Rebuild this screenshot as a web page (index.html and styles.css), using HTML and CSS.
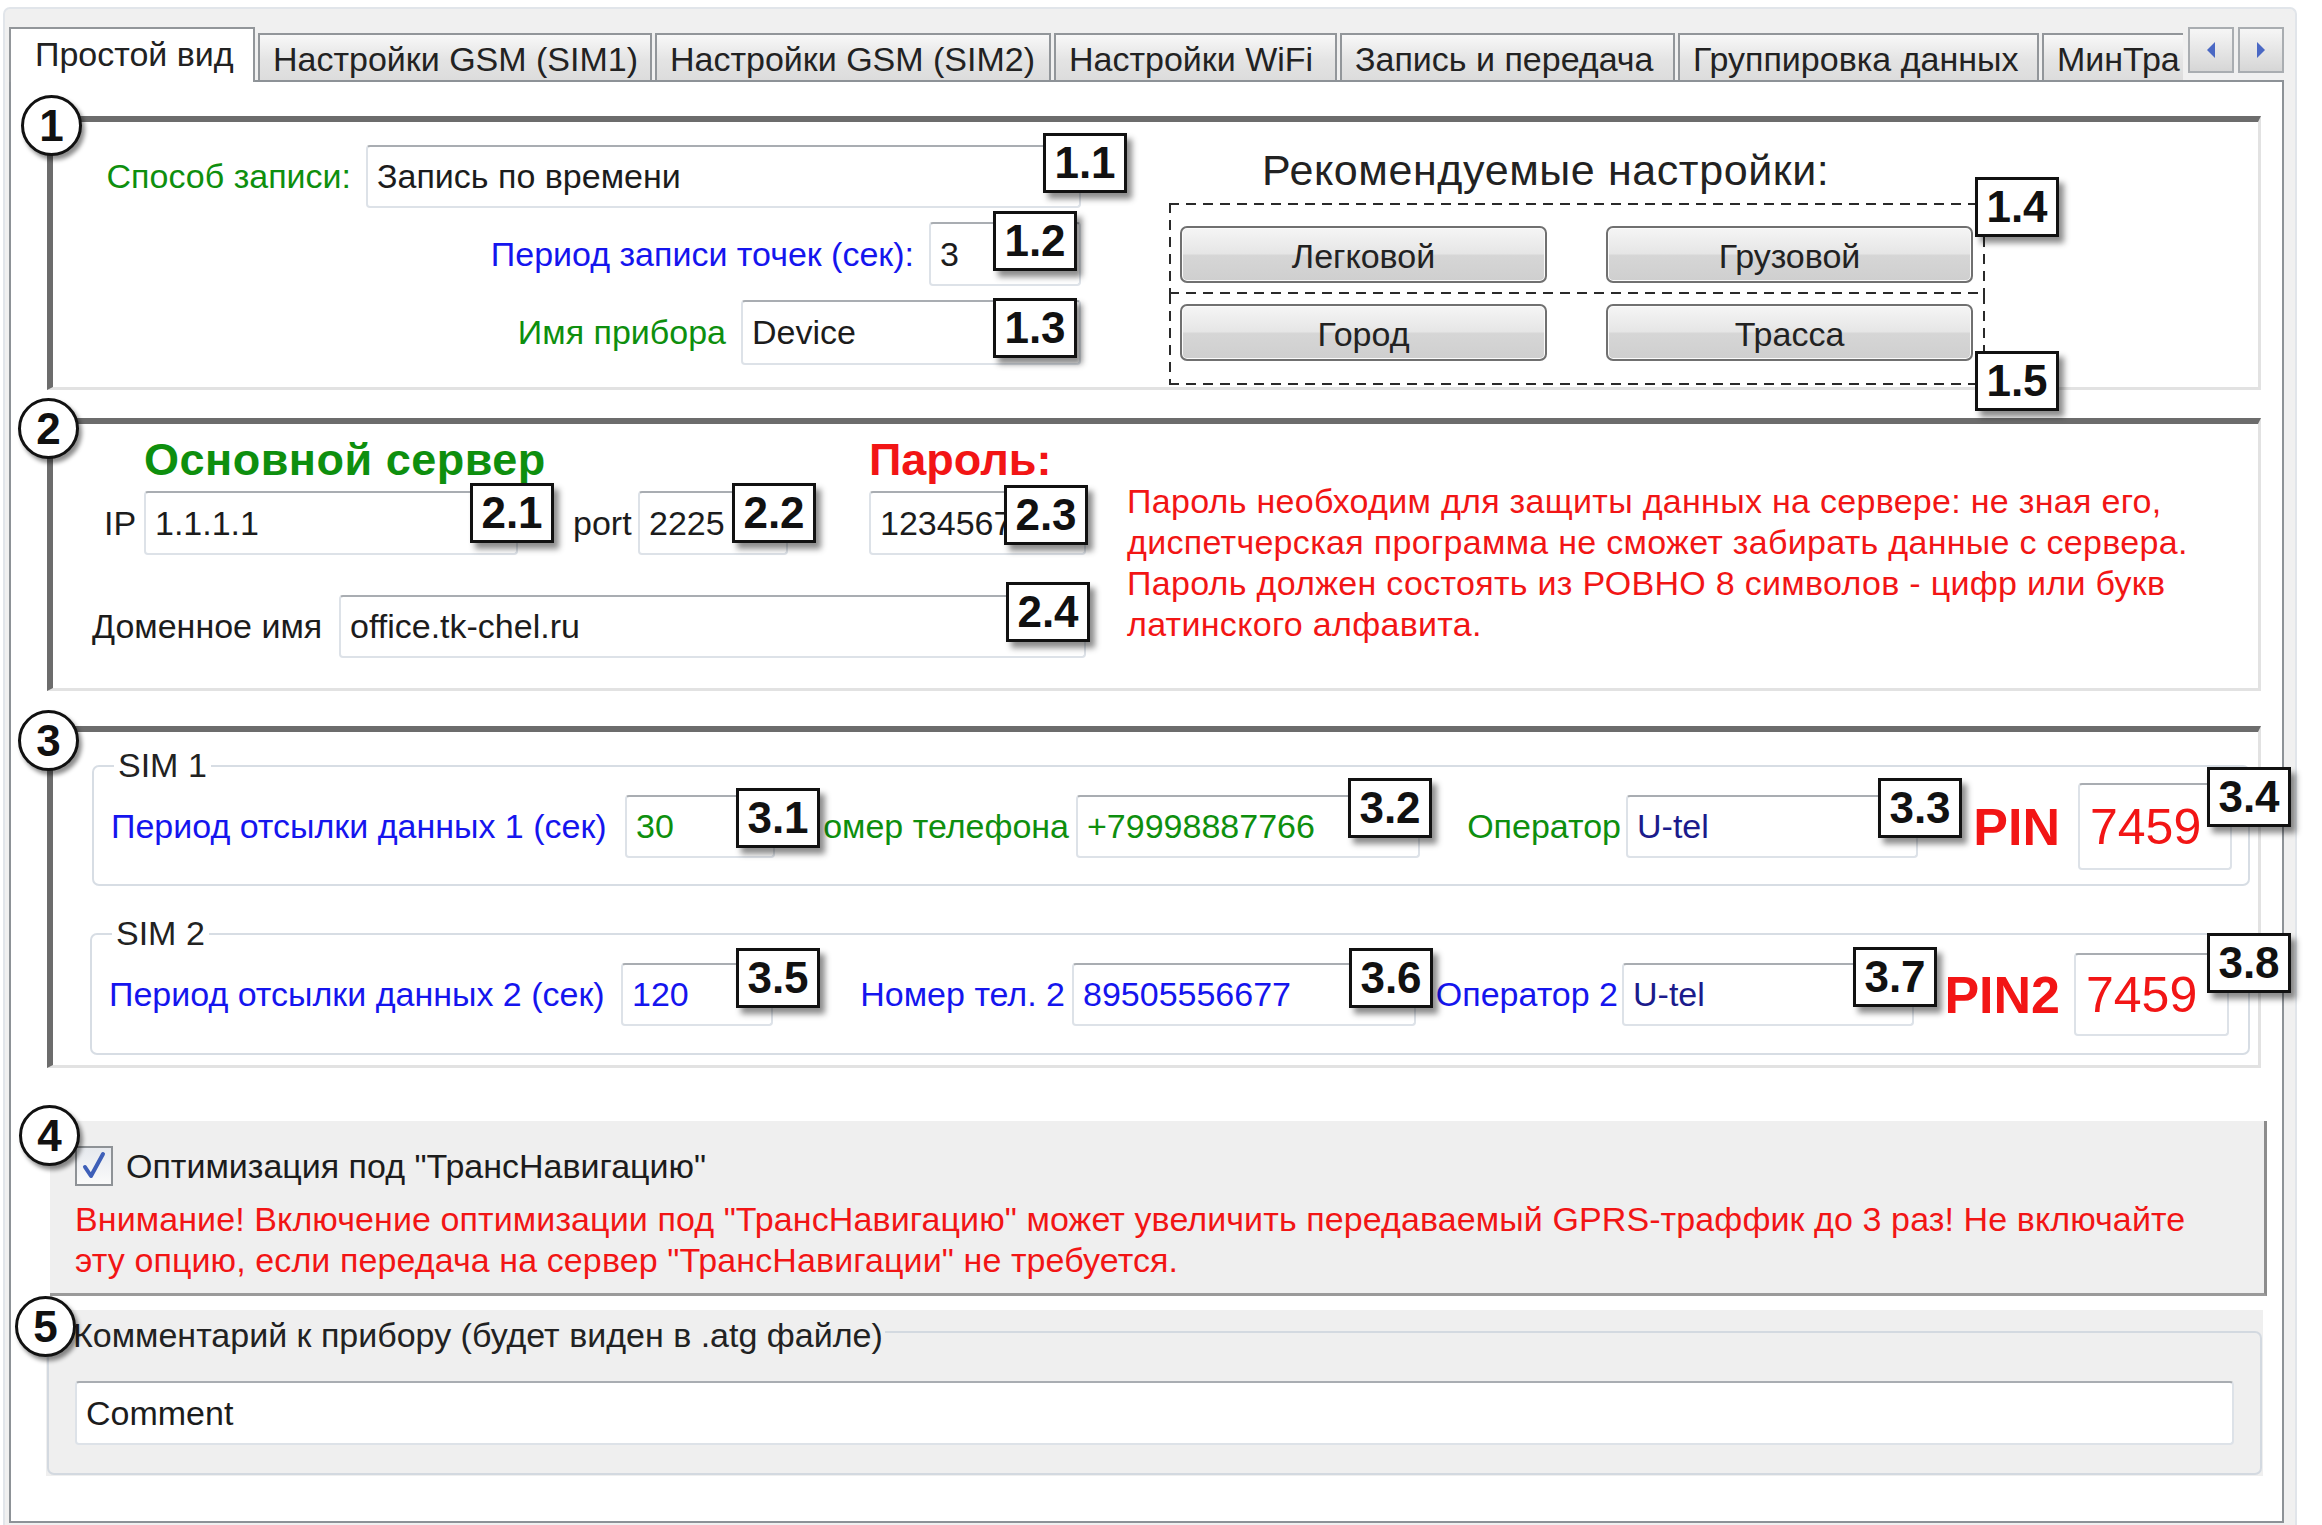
FILE: index.html
```html
<!DOCTYPE html>
<html lang="ru">
<head>
<meta charset="utf-8">
<title>Простой вид</title>
<link rel="stylesheet" href="styles.css">
</head>
<body>
<div class="window">
  <div class="tabstrip">
    <div class="tabs">
      <div class="tab active">Простой вид</div>
      <div class="tab tw2">Настройки GSM (SIM1)</div>
      <div class="tab tw3">Настройки GSM (SIM2)</div>
      <div class="tab tw4">Настройки WiFi</div>
      <div class="tab tw5">Запись и передача</div>
      <div class="tab tw6">Группировка данных</div>
      <div class="tab tw7">МинТра</div>
    </div>
    <div class="arrow"><svg width="12" height="18" viewBox="0 0 12 18"><polygon points="10,1 2,9 10,17" fill="#4a68c4"/></svg></div>
    <div class="arrow a2"><svg width="12" height="18" viewBox="0 0 12 18"><polygon points="2,1 10,9 2,17" fill="#4a68c4"/></svg></div>
  </div>

  <div class="panel">
    <!-- 1 -->
    <section class="grp g1">
      <span class="circle c1">1</span>
      <div class="g1-left">
        <div class="frow">
          <span class="green">Способ записи:</span>
          <div class="inp in-mode">Запись по времени</div>
        </div>
        <div class="frow">
          <span class="blue">Период записи точек (сек):</span>
          <div class="inp in-period">3</div>
        </div>
        <div class="frow">
          <span class="green">Имя прибора</span>
          <div class="inp in-name">Device</div>
        </div>
      </div>
      <div class="g1-right">
        <div class="rec-title">Рекомендуемые настройки:</div>
        <div class="dash d1">
          <div class="btn">Легковой</div>
          <div class="btn">Грузовой</div>
        </div>
        <div class="dash d2">
          <div class="btn">Город</div>
          <div class="btn">Трасса</div>
        </div>
      </div>
      <b class="tag t11">1.1</b>
      <b class="tag t12">1.2</b>
      <b class="tag t13">1.3</b>
      <b class="tag t14">1.4</b>
      <b class="tag t15">1.5</b>
    </section>

    <!-- 2 -->
    <section class="grp g2">
      <span class="circle c2">2</span>
      <div class="g2-left">
        <div class="heads">
          <span class="h-srv">Основной сервер</span>
          <span class="h-pw">Пароль:</span>
        </div>
        <div class="fields">
          <span class="lbl-ip">IP</span>
          <div class="inp in-ip">1.1.1.1</div>
          <span class="lbl-port">port</span>
          <div class="inp in-port">2225</div>
          <div class="inp in-pw">1234567</div>
        </div>
        <div class="dom">
          <span class="lbl-dom">Доменное имя</span>
          <div class="inp in-dom">office.tk-chel.ru</div>
        </div>
      </div>
      <div class="g2-note">Пароль необходим для защиты данных на сервере: не зная его,<br>диспетчерская программа не сможет забирать данные с сервера.<br>Пароль должен состоять из РОВНО 8 символов - цифр или букв<br>латинского алфавита.</div>
      <b class="tag t21">2.1</b>
      <b class="tag t22">2.2</b>
      <b class="tag t23">2.3</b>
      <b class="tag t24">2.4</b>
    </section>

    <!-- 3 -->
    <section class="grp g3">
      <span class="circle c3">3</span>
      <div class="sim sim1">
        <span class="legend">SIM 1</span>
        <div class="srow">
          <span class="blue s1-l1">Период отсылки данных 1 (сек)</span>
          <div class="inp green s1-i1">30</div>
          <span class="green rl s1-l2"><span>Номер телефона</span></span>
          <div class="inp green s-phone">+79998887766</div>
          <span class="green rl s1-l3">Оператор</span>
          <div class="inp navy s-op">U-tel</div>
          <span class="pin rl s1-l4">PIN</span>
          <div class="inp pinval s1-i4">7459</div>
        </div>
      </div>
      <div class="sim sim2">
        <span class="legend">SIM 2</span>
        <div class="srow">
          <span class="blue s2-l1">Период отсылки данных 2 (сек)</span>
          <div class="inp blue s2-i1">120</div>
          <span class="blue rl s2-l2">Номер тел. 2</span>
          <div class="inp blue s-phone">89505556677</div>
          <span class="blue rl s2-l3">Оператор 2</span>
          <div class="inp navy s-op">U-tel</div>
          <span class="pin rl s2-l4">PIN2</span>
          <div class="inp pinval s2-i4">7459</div>
        </div>
      </div>
      <b class="tag t31">3.1</b>
      <b class="tag t32">3.2</b>
      <b class="tag t33">3.3</b>
      <b class="tag t34">3.4</b>
      <b class="tag t35">3.5</b>
      <b class="tag t36">3.6</b>
      <b class="tag t37">3.7</b>
      <b class="tag t38">3.8</b>
    </section>

    <!-- 4 -->
    <section class="g4">
      <span class="circle c4">4</span>
      <div class="chk-row">
        <span class="chk"><svg width="30" height="32" viewBox="0 0 30 32"><path d="M6 17 L12 26 L24 4" fill="none" stroke="#3e5fb8" stroke-width="4" stroke-linecap="round" stroke-linejoin="round"/></svg></span>
        <span>Оптимизация под "ТрансНавигацию"</span>
      </div>
      <div class="warn">Внимание! Включение оптимизации под "ТрансНавигацию" может увеличить передаваемый GPRS-траффик до 3 раз! Не включайте<br>эту опцию, если передача на сервер "ТрансНавигации" не требуется.</div>
    </section>

    <!-- 5 -->
    <section class="g5">
      <span class="circle c5">5</span>
      <div class="cfs">
        <span class="legend lg5">Комментарий к прибору (будет виден в .atg файле)</span>
        <div class="inp in-comment">Comment</div>
      </div>
    </section>
  </div>
</div>
</body>
</html>
```
FILE: styles.css
```css
* { box-sizing: border-box; }
html, body { margin: 0; background: #fff; }
body {
  font-family: "Liberation Sans", Arial, sans-serif;
  font-size: 34px;
  color: #1c1c1c;
  width: 2322px;
  height: 1525px;
  overflow: hidden;
}

.green { color: #0e8f0e; }
.blue { color: #1515ee; }
.navy { color: #1b1b8c; }
.rl { text-align: right; white-space: nowrap; }

/* window + tabs */
.window {
  margin: 7px 0 0 3px;
  width: 2294px;
  height: 1518px;
  border: 2px solid #e1e5ea;
  border-bottom: 0;
  border-radius: 7px 7px 0 0;
  background: #f0f0f0;
  padding: 18px 10px 0 4px;
}
.tabstrip { display: flex; height: 53px; align-items: flex-start; }
.tabs {
  display: flex;
  align-items: flex-end;
  width: 2174px;
  height: 55px;
  overflow: hidden;
  flex: none;
  position: relative;
  z-index: 2;
}
.tab {
  flex: none;
  height: 47px;
  margin: 0 0 2px 3px;
  border: 2px solid #92969a;
  border-bottom: 0;
  background: linear-gradient(#f8f8f8, #e4e4e4 55%, #dcdcdc);
  padding: 5px 0 0 13px;
  line-height: 38px;
  white-space: nowrap;
  overflow: hidden;
  color: #222;
}
.tab.active {
  height: 55px;
  width: 246px;
  margin: 0;
  background: #fff;
  padding: 6px 0 0 24px;
}
.tw2 { width: 394px; }
.tw3 { width: 396px; }
.tw4 { width: 283px; }
.tw5 { width: 335px; }
.tw6 { width: 361px; }
.tw7 { width: 160px; }
.arrow {
  flex: none;
  width: 46px;
  height: 46px;
  margin-left: 5px;
  border: 2px solid #a9adb1;
  background: linear-gradient(#f6f6f6, #e6e6e6 50%, #d6d6d6);
  display: flex;
  align-items: center;
  justify-content: center;
}
.arrow.a2 { margin-left: 4px; }

.panel {
  position: relative;
  z-index: 1;
  width: 2275px;
  height: 1443px;
  border: 2px solid #8d9297;
  background: #fff;
  padding: 34px 0 0 36px;
}

/* generic group frame */
.grp {
  position: relative;
  width: 2214px;
  border-top: 6px solid #6c6c6c;
  border-left: 6px solid #6c6c6c;
  border-right: 3px solid #e2e2e2;
  border-bottom: 3px solid #e2e2e2;
}
.g1 { height: 274px; display: flex; }
.g2 { height: 273px; display: flex; margin-top: 28px; }
.g3 { height: 342px; margin-top: 35px; }

.circle {
  position: absolute;
  z-index: 4;
  width: 61px;
  height: 61px;
  border: 3px solid #111;
  border-radius: 50%;
  background: #fff;
  font-weight: bold;
  font-size: 44px;
  line-height: 55px;
  text-align: center;
  color: #111;
  box-shadow: 3px 4px 4px rgba(0, 0, 0, 0.45);
}
.c1 { left: -32px; top: -27px; }
.c2 { left: -35px; top: -26px; }
.c3 { left: -35px; top: -22px; }
.c4 { left: -31px; top: -16px; }
.c5 { left: -31px; top: -14px; }

.tag {
  position: absolute;
  z-index: 4;
  width: 84px;
  height: 60px;
  border: 3px solid #111;
  background: #fff;
  font-family: "Liberation Sans Narrow", "Liberation Sans", Arial, sans-serif;
  font-weight: bold;
  font-size: 44px;
  line-height: 54px;
  text-align: center;
  color: #111;
  box-shadow: 5px 6px 6px rgba(0, 0, 0, 0.45);
}
.t11 { left: 990px; top: 11px; }
.t12 { left: 940px; top: 89px; }
.t13 { left: 940px; top: 176px; }
.t14 { left: 1922px; top: 55px; }
.t15 { left: 1922px; top: 229px; }
.t21 { left: 417px; top: 59px; }
.t22 { left: 679px; top: 59px; }
.t23 { left: 951px; top: 61px; }
.t24 { left: 953px; top: 158px; }
.t31 { left: 683px; top: 56px; }
.t32 { left: 1295px; top: 46px; }
.t33 { left: 1825px; top: 46px; }
.t34 { left: 2154px; top: 35px; }
.t35 { left: 683px; top: 216px; }
.t36 { left: 1296px; top: 216px; }
.t37 { left: 1800px; top: 215px; }
.t38 { left: 2154px; top: 201px; }

/* inputs */
.inp {
  flex: none;
  display: flex;
  align-items: center;
  height: 63px;
  padding-left: 9px;
  background: #fff;
  border: 2px solid #dde2e8;
  border-top-color: #a9adb2;
  border-radius: 4px;
  white-space: nowrap;
  overflow: hidden;
}

/* group 1 */
.g1-left {
  width: 1028px;
  padding-top: 23px;
  display: flex;
  flex-direction: column;
  gap: 14px;
}
.frow {
  display: flex;
  justify-content: flex-end;
  align-items: center;
  gap: 15px;
  white-space: nowrap;
}
.in-mode { width: 715px; height: 63px; }
.in-period { width: 152px; height: 64px; }
.in-name { width: 340px; height: 65px; }

.g1-right { margin-left: 88px; padding-top: 28px; width: 816px; }
.rec-title {
  font-size: 43px;
  letter-spacing: 0.6px;
  line-height: 40px;
  height: 40px;
  padding-left: 93px;
  margin-bottom: 13px;
  white-space: nowrap;
  color: #222;
}
.dash {
  height: 91px;
  display: flex;
  gap: 59px;
  padding-left: 11px;
  background:
    repeating-linear-gradient(90deg, #2a2a2a 0 10px, transparent 10px 17px) left bottom / 100% 2px no-repeat,
    repeating-linear-gradient(180deg, #2a2a2a 0 10px, transparent 10px 17px) left top / 2px 100% no-repeat,
    repeating-linear-gradient(180deg, #2a2a2a 0 10px, transparent 10px 17px) right top / 2px 100% no-repeat;
}
.d1 {
  padding-top: 23px;
  background:
    repeating-linear-gradient(90deg, #2a2a2a 0 10px, transparent 10px 17px) left top / 100% 2px no-repeat,
    repeating-linear-gradient(90deg, #2a2a2a 0 10px, transparent 10px 17px) left bottom / 100% 2px no-repeat,
    repeating-linear-gradient(180deg, #2a2a2a 0 10px, transparent 10px 17px) left top / 2px 100% no-repeat,
    repeating-linear-gradient(180deg, #2a2a2a 0 10px, transparent 10px 17px) right top / 2px 100% no-repeat;
}
.d2 { padding-top: 10px; }
.btn {
  flex: none;
  width: 367px;
  height: 57px;
  padding-top: 3px;
  border: 2px solid #707070;
  border-radius: 7px;
  background: linear-gradient(#f5f5f5, #e6e6e6 48%, #d6d6d6 52%, #cfcfcf);
  box-shadow: inset 0 0 0 1px #fbfbfb;
  display: flex;
  align-items: center;
  justify-content: center;
  color: #222;
}

/* group 2 */
.g2-left { width: 1033px; padding-top: 13px; flex: none; }
.heads { display: flex; height: 46px; line-height: 46px; font-weight: bold; white-space: nowrap; }
.h-srv { margin-left: 91px; width: 725px; font-size: 45px; letter-spacing: 0.5px; color: #0e8f0e; }
.h-pw { font-size: 45px; color: #f21515; }
.fields { display: flex; align-items: center; height: 64px; margin-top: 8px; }
.fields .inp { height: 64px; }
.lbl-ip { margin-left: 51px; width: 40px; }
.in-ip { width: 374px; }
.lbl-port { margin-left: 55px; width: 65px; }
.in-port { width: 150px; }
.in-pw { margin-left: 81px; width: 217px; }
.dom { display: flex; align-items: center; height: 63px; margin-top: 40px; }
.lbl-dom { margin-left: 39px; width: 247px; white-space: nowrap; }
.in-dom { width: 747px; }
.g2-note {
  margin-left: 41px;
  padding-top: 57px;
  color: #f21515;
  line-height: 41px;
  letter-spacing: 0.3px;
  white-space: nowrap;
}

/* group 3 */
.sim {
  border: 2px solid #d7dde4;
  border-radius: 7px;
}
.sim1 { width: 2158px; height: 121px; margin: 33px 0 0 39px; }
.sim2 { width: 2160px; height: 122px; margin: 47px 0 0 37px; }
.legend {
  display: block;
  width: max-content;
  height: 40px;
  line-height: 40px;
  margin: -22px 0 0 20px;
  padding: 0 4px;
  background: #fff;
  color: #222;
}
.srow { display: flex; align-items: center; height: 63px; margin-top: 10px; }
.srow > span { flex: none; white-space: nowrap; }
.s1-l1 { margin-left: 17px; width: 514px; }
.s1-i1 { width: 150px; }
.s1-l2 {
  margin-left: 48px;
  width: 253px;
  padding-right: 7px;
  display: flex;
  justify-content: flex-end;
  overflow: hidden;
}
.s1-l2 > span { flex: none; }
.s-phone { width: 344px; }
.s1-l3 { width: 206px; padding-right: 5px; }
.s-op { width: 292px; }
.s1-l4 { width: 160px; padding-right: 18px; }
.s1-i4 { width: 154px; height: 87px; }
.s2-l1 { margin-left: 17px; width: 512px; }
.s2-i1 { width: 152px; }
.s2-l2 { width: 299px; padding-right: 7px; }
.s2-l3 { width: 206px; padding-right: 4px; }
.s2-l4 { width: 160px; padding-right: 14px; }
.s2-i4 { width: 155px; height: 83px; }
.pin { color: #f21515; font-weight: bold; font-size: 52px; }
.pinval { color: #f21515; font-size: 50px; padding-left: 10px; }

/* group 4 */
.g4 {
  position: relative;
  width: 2217px;
  height: 175px;
  margin: 53px 0 0 3px;
  border-right: 3px solid #8c8c8c;
  border-bottom: 3px solid #9a9a9a;
  background: #efefef;
  padding: 25px 0 0 25px;
}
.chk-row { display: flex; align-items: center; gap: 13px; height: 40px; white-space: nowrap; }
.chk {
  width: 38px;
  height: 40px;
  border: 2px solid #8e9296;
  background: linear-gradient(#e6e9ee, #fafafa);
  display: flex;
  align-items: center;
  justify-content: center;
}
.warn { margin-top: 13px; color: #f21515; line-height: 41px; letter-spacing: 0.1px; white-space: nowrap; }

/* group 5 */
.g5 {
  position: relative;
  width: 2217px;
  height: 166px;
  margin: 14px 0 0 -1px;
  background: #efefef;
  padding-top: 21px;
}
.cfs {
  width: 2215px;
  height: 144px;
  margin-left: 1px;
  border: 2px solid #d3d9e0;
  border-radius: 7px;
}
.lg5 { margin-top: -18px; background: #efefef; padding: 0 2px; margin-left: 22px; }
.in-comment { width: 2159px; height: 64px; margin: 26px 0 0 26px; }
```
